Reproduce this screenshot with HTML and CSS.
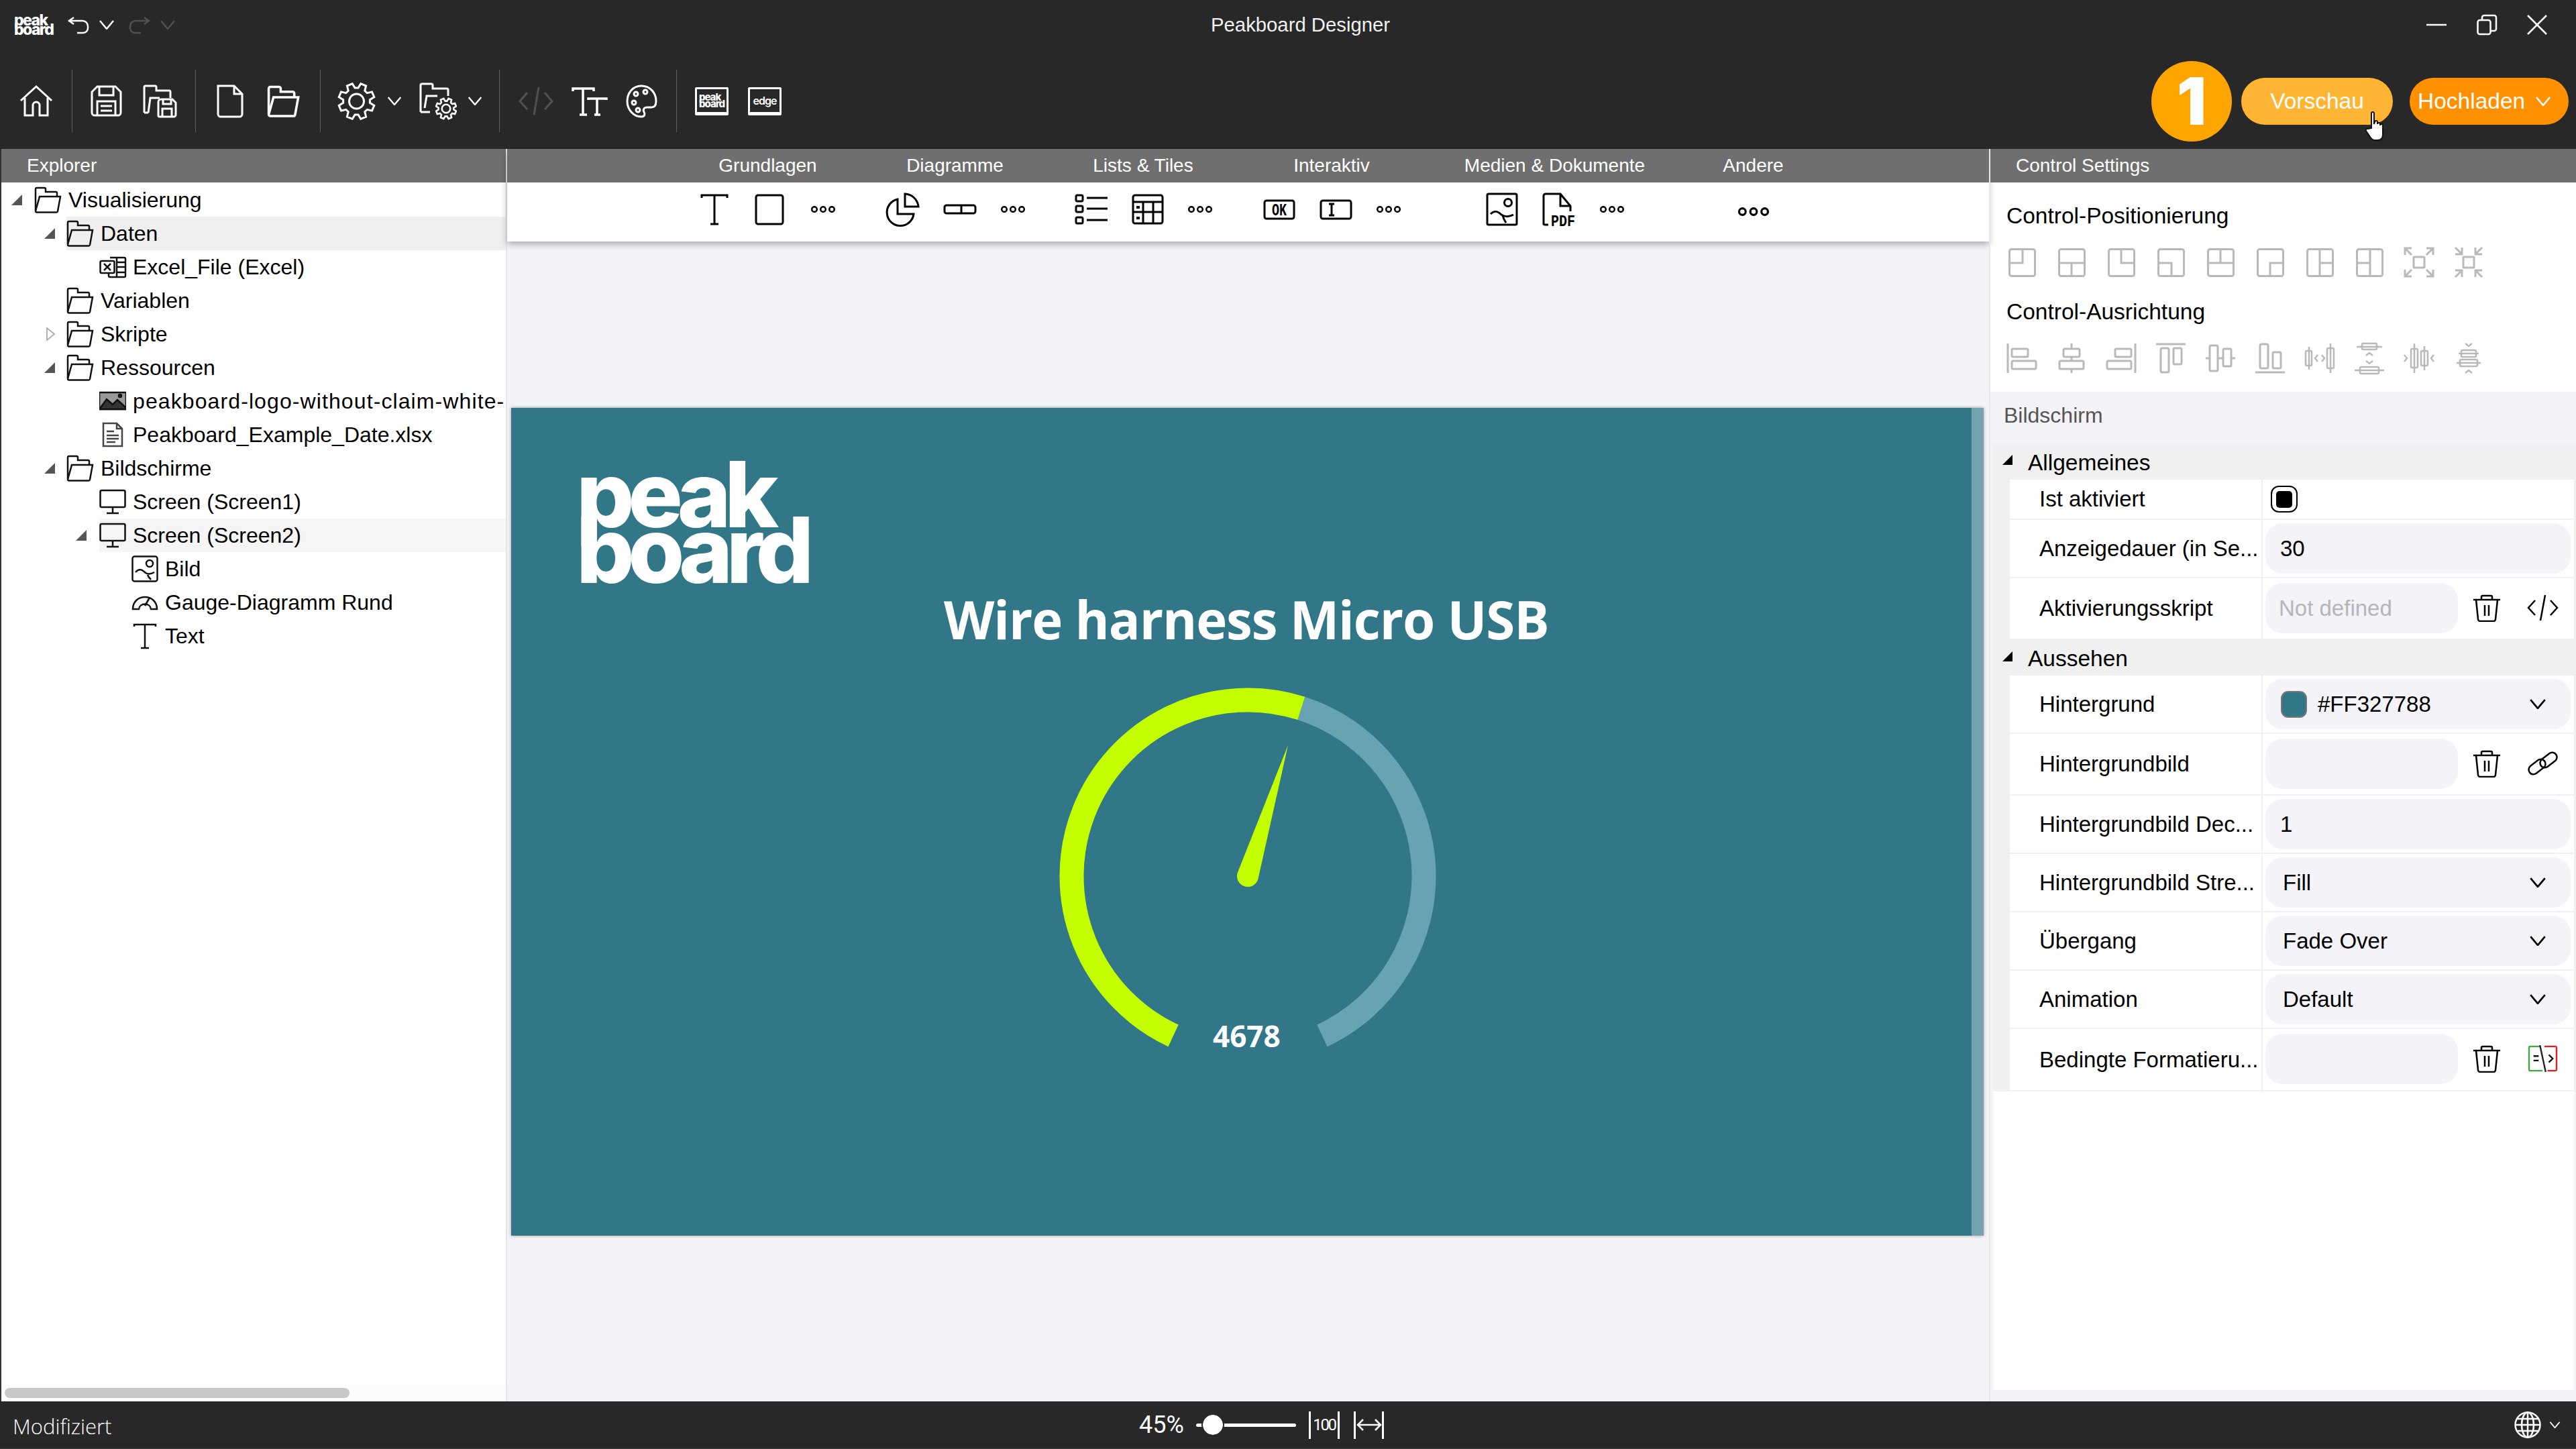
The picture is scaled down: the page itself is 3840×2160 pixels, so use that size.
FILE: index.html
```html
<!DOCTYPE html>
<html lang="de">
<head>
    <meta charset="UTF-8">
    <title>Peakboard Designer</title>
    <link rel="stylesheet" href="styles.css">
</head>
<body>

<!-- shared icons -->
<svg class="defs" width="0" height="0">
    <symbol id="chev" viewBox="0 0 22 14"><path d="M1 1L11 13L21 1"/></symbol>
    <symbol id="folder" viewBox="0 0 42 40"><path d="M3 36V4a2 2 0 0 1 2-2h11a2 2 0 0 1 2 2v4h15a2 2 0 0 1 2 2v5"/><path d="M9 15h31l-4 22a2 2 0 0 1-2 1.500H5a2 2 0 0 1-2-2z"/></symbol>
    <symbol id="monitor" viewBox="0 0 40 40"><rect x="1.500" y="3" width="37" height="25" rx="2"/><path d="M20 28v8M11 37h18"/></symbol>
    <symbol id="dots" viewBox="0 0 36 10"><circle cx="5" cy="5" r="3.800"/><circle cx="18" cy="5" r="3.800"/><circle cx="31" cy="5" r="3.800"/></symbol>
    <symbol id="trash" viewBox="0 0 42 41"><path d="M1 8H41M13 8V4a2 2 0 0 1 2-2h12a2 2 0 0 1 2 2v4M5 8l3 29a3 3 0 0 0 3 3h20a3 3 0 0 0 3-3l3-29M18 16v16M24 16v16"/></symbol>
    <symbol id="gear" viewBox="0 0 56 56"><polygon points="30.400,8.100 34.300,1.700 42.100,5 40.300,12.200 43.800,15.700 51,13.900 54.300,21.700 47.900,25.600 47.900,30.400 54.300,34.300 51,42.100 43.800,40.300 40.300,43.800 42.100,51 34.300,54.300 30.400,47.900 25.600,47.900 21.700,54.300 13.900,51 15.700,43.800 12.200,40.300 5,42.100 1.700,34.300 8.100,30.400 8.100,25.600 1.700,21.700 5,13.900 12.200,15.700 15.700,12.200 13.900,5 21.700,1.700 25.600,8.100"/><circle cx="28" cy="28" r="11"/></symbol>
</svg>

<header class="titlebar">
    <div class="titlebar-left">
        <div class="logo logo-title">peak<br>board</div>
        <svg class="ico thin undo" viewBox="0 0 32 25"><path d="M9 1L2 6L9 11M2 6H22a8 8 0 0 1 8 8v3a7 7 0 0 1-7 7H14"/></svg>
        <svg class="ico thin chev-sm"><use href="#chev"/></svg>
        <svg class="ico thin undo dim redo" viewBox="0 0 32 25"><path d="M23 1L30 6L23 11M30 6H10a8 8 0 0 0-8 8v3a7 7 0 0 0 7 7h9"/></svg>
        <svg class="ico thin chev-sm dim"><use href="#chev"/></svg>
    </div>
    <div class="app-title">Peakboard Designer</div>
    <div class="window-controls">
        <svg class="ico thin win" viewBox="0 0 30 30"><path d="M0 15H30"/></svg>
        <svg class="ico thin win" viewBox="0 0 30 30"><rect x="1.500" y="8" width="19" height="21" rx="3"/><path d="M8 8V4a3 3 0 0 1 3-3h15a3 3 0 0 1 3 3v17a3 3 0 0 1-3 3h-5"/></svg>
        <svg class="ico thin win" viewBox="0 0 30 30"><path d="M1 1L29 29M29 1L1 29"/></svg>
    </div>
</header>

<div class="toolbar">
    <div class="tb-group tb-home">
        <svg class="ico tb-icon" width="50" height="47" viewBox="0 0 50 47"><path d="M2 23L25 2L48 23M8 19V45H20V30a5 5 0 0 1 10 0V45H42V19"/></svg>
    </div>
    <div class="tb-group tb-save">
        <svg class="ico tb-icon" width="47" height="47" viewBox="0 0 47 47"><path d="M10 2H37L45 10V41a4 4 0 0 1-4 4H6a4 4 0 0 1-4-4V10zM13 2V15H34V2M10 45V24H37V45M15 31H32M15 38H32"/></svg>
        <svg class="ico tb-icon" width="51" height="50" viewBox="0 0 51 50"><path d="M2 42V4a2 2 0 0 1 2-2h14a2 2 0 0 1 2 2v5h19a2 2 0 0 1 2 2v9M8 42H2M8 42L11 20H25"/><path d="M31 22H44L49 27V45a3 3 0 0 1-3 3H25a2 2 0 0 1-2-2V26a4 4 0 0 1 4-4zM30 22V29H42V22M29 48V36H43V48"/></svg>
    </div>
    <div class="tb-group tb-file">
        <svg class="ico tb-icon" width="42" height="50" viewBox="0 0 42 50"><path d="M3 2H27L39 14V44a4 4 0 0 1-4 4H7a4 4 0 0 1-4-4zM27 2V14H39"/></svg>
        <svg class="ico tb-icon" width="50" height="50" viewBox="0 0 50 50"><use href="#folder"/></svg>
    </div>
    <div class="tb-group tb-settings">
        <svg class="ico tb-icon" width="57" height="56"><use href="#gear"/></svg>
        <svg class="ico thin chev-md"><use href="#chev"/></svg>
        <svg class="ico tb-icon folder-gear" width="56" height="56" viewBox="0 0 56 56"><path d="M2 44V4a2 2 0 0 1 2-2h14a2 2 0 0 1 2 2v5h21a2 2 0 0 1 2 2v9M2 44H16M8 38L11 20H27"/><svg x="24" y="22" width="32" height="34"><use href="#gear" stroke-width="4.500"/></svg></svg>
        <svg class="ico thin chev-md chev-last"><use href="#chev"/></svg>
    </div>
    <div class="tb-group tb-view">
        <svg class="ico tb-icon dim" width="52" height="43" viewBox="0 0 52 43"><path d="M13 9L2 22L13 34M39 9L50 22L39 34M30 1L23 42"/></svg>
        <svg class="ico thin tb-icon" width="50" height="42" viewBox="0 0 50 42"><path d="M0 6V2H31V6M15 2V41M10 41H21M23 19V17H50V19M36 17V41M32 41H41" stroke-width="3.500"/></svg>
        <svg class="ico tb-icon" width="47" height="50" viewBox="0 0 47 50"><path d="M23 2C10 2 2 13 2 25s9 23 21 23c5 0 6-4 4-7-2-4 0-7 5-7h6c5 0 7-4 7-9C45 12 36 2 23 2z"/><circle cx="15" cy="14" r="3"/><circle cx="29" cy="11" r="3"/><circle cx="12" cy="27" r="3"/><circle cx="18" cy="38" r="3"/></svg>
    </div>
    <div class="tb-group tb-target">
        <div class="target-box"><div class="logo logo-box">peak<br>board</div></div>
        <div class="target-box"><span class="target-edge">edge</span></div>
    </div>
    <div class="tb-actions">
        <div class="step-badge">1</div>
        <div class="btn btn-preview">
            Vorschau
            <svg class="hand" width="31" height="45" viewBox="0 0 31 45"><path d="M10 26V4a2 2 0 0 1 4 0V20l1-3a2 2 0 0 1 4 0V20a2 2 0 0 1 4 0v2a2 2 0 0 1 4 0V36c0 5-3 8-8 8H15c-3 0-5-2-7-5L2 30c-1-2 1-4 3-3z" fill="#fff" stroke="#111" stroke-width="2"/></svg>
        </div>
        <div class="btn btn-upload">Hochladen <svg class="ico thin chev-sm"><use href="#chev"/></svg></div>
    </div>
</div>

<div class="main">
    <!-- Explorer -->
    <aside class="explorer">
        <div class="panel-head">Explorer</div>
        <div class="tree">
            <div class="row lvl0"><svg class="caret" viewBox="0 0 16 16"><polygon points="0,16 16,16 16,0"/></svg><div class="node"><svg class="ico tree-ico folder-ico"><use href="#folder"/></svg><span>Visualisierung</span></div></div>
            <div class="row lvl1"><svg class="caret" viewBox="0 0 16 16"><polygon points="0,16 16,16 16,0"/></svg><div class="node hover"><svg class="ico tree-ico folder-ico"><use href="#folder"/></svg><span>Daten</span></div></div>
            <div class="row lvl2"><div class="node"><svg class="ico tree-ico" viewBox="0 0 40 40"><path d="M16 6H37a2 2 0 0 1 2 2V33a2 2 0 0 1-2 2H16a2 2 0 0 1-2-2V29M26 6V35M26 13H39M26 20H39M26 28H39"/><rect x="1.500" y="11" width="21" height="18" rx="2"/><path d="M7 15l10 10M17 15L7 25"/></svg><span>Excel_File (Excel)</span></div></div>
            <div class="row lvl1"><div class="caret-slot"></div><div class="node"><svg class="ico tree-ico folder-ico"><use href="#folder"/></svg><span>Variablen</span></div></div>
            <div class="row lvl1"><svg class="caret closed" viewBox="0 0 16 20"><polygon points="4,1 15,10 4,19"/></svg><div class="node"><svg class="ico tree-ico folder-ico"><use href="#folder"/></svg><span>Skripte</span></div></div>
            <div class="row lvl1"><svg class="caret" viewBox="0 0 16 16"><polygon points="0,16 16,16 16,0"/></svg><div class="node"><svg class="ico tree-ico folder-ico"><use href="#folder"/></svg><span>Ressourcen</span></div></div>
            <div class="row lvl2"><div class="node"><svg class="tree-ico" viewBox="0 0 40 40"><rect x="0" y="7" width="40" height="25" fill="#999"/><path d="M0 32L11 17L20 25L27 18L40 30V32z" fill="#333"/><circle cx="31" cy="12" r="2" fill="#333"/></svg><span class="long-name">peakboard-logo-without-claim-white-</span></div></div>
            <div class="row lvl2"><div class="node"><svg class="ico tree-ico file-ico" viewBox="0 0 40 40"><path d="M6 3H26L34 11V37H6zM26 3V11H34M11 15H22M11 21H29M11 26H29M11 31H24"/></svg><span>Peakboard_Example_Date.xlsx</span></div></div>
            <div class="row lvl1"><svg class="caret" viewBox="0 0 16 16"><polygon points="0,16 16,16 16,0"/></svg><div class="node"><svg class="ico tree-ico folder-ico"><use href="#folder"/></svg><span>Bildschirme</span></div></div>
            <div class="row lvl2"><div class="node"><svg class="ico tree-ico"><use href="#monitor"/></svg><span>Screen (Screen1)</span></div></div>
            <div class="row lvl2-open"><svg class="caret" viewBox="0 0 16 16"><polygon points="0,16 16,16 16,0"/></svg><div class="node selected"><svg class="ico tree-ico"><use href="#monitor"/></svg><span>Screen (Screen2)</span></div></div>
            <div class="row lvl3"><div class="node"><svg class="ico tree-ico" viewBox="0 0 40 40"><rect x="1.500" y="1.500" width="37" height="37" rx="3"/><circle cx="27" cy="12" r="5"/><path d="M6 25c6-7 11-3 15 1 3 2 8 2 13-1M24 29c1 3 3 5 5 7"/></svg><span>Bild</span></div></div>
            <div class="row lvl3"><div class="node"><svg class="ico tree-ico" viewBox="0 0 40 40"><path d="M2 30C2 6 38 6 38 30H29C28 20 12 20 11 30zM20 25L27 13"/></svg><span>Gauge-Diagramm Rund</span></div></div>
            <div class="row lvl3"><div class="node"><svg class="ico tree-ico" viewBox="0 0 40 40"><path d="M4 6V3H36V6M20 3V38M14 38H26"/></svg><span>Text</span></div></div>
        </div>
        <div class="tree-scroll"><div class="tree-thumb"></div></div>
    </aside>

    <!-- Designer -->
    <section class="designer">
        <div class="toolbox">
            <div class="tool-col col-a"><div class="tool-label">Grundlagen</div>
                <div class="tool-icons basics">
                    <svg class="ico black" width="40" height="47" viewBox="0 0 40 47"><path d="M1 6V2H39V6M20 2V45M14 45H26"/></svg>
                    <svg class="ico black" width="44" height="47" viewBox="0 0 44 47"><rect x="2" y="2" width="40" height="43" rx="3"/></svg>
                    <svg class="ico black dots"><use href="#dots"/></svg>
                </div>
            </div>
            <div class="tool-col col-a"><div class="tool-label">Diagramme</div>
                <div class="tool-icons">
                    <svg class="ico black" width="50" height="50" viewBox="0 0 50 50"><path d="M18 10A20 20 0 1 0 42 32H18z"/><path d="M29 2A21 21 0 0 1 49 21H29z"/></svg>
                    <svg class="ico black" width="50" height="16" viewBox="0 0 50 16"><rect x="2" y="2" width="46" height="12" rx="3"/><path d="M27 2V14"/></svg>
                    <svg class="ico black dots"><use href="#dots"/></svg>
                </div>
            </div>
            <div class="tool-col col-b"><div class="tool-label">Lists &amp; Tiles</div>
                <div class="tool-icons">
                    <svg class="ico black" width="49" height="46" viewBox="0 0 49 46"><rect x="2" y="2" width="10" height="9" rx="2"/><rect x="2" y="18" width="10" height="9" rx="2"/><rect x="2" y="35" width="10" height="9" rx="2"/><path d="M18 6H49M18 22H49M18 39H49"/></svg>
                    <svg class="ico black" width="48" height="46" viewBox="0 0 48 46"><rect x="2" y="2" width="44" height="42" rx="3"/><path d="M2 12H46M2 27H46M17 12V44M32 12V44"/><path d="M7 20H12M7 36H12" stroke-width="4"/></svg>
                    <svg class="ico black dots"><use href="#dots"/></svg>
                </div>
            </div>
            <div class="tool-col col-c"><div class="tool-label">Interaktiv</div>
                <div class="tool-icons">
                    <svg class="ico black" width="48" height="31" viewBox="0 0 48 31"><rect x="2" y="2" width="44" height="27" rx="3"/><text class="icon-text" x="13" y="24" textLength="22" lengthAdjust="spacingAndGlyphs">OK</text></svg>
                    <svg class="ico black" width="49" height="31" viewBox="0 0 49 31"><rect x="2" y="2" width="45" height="27" rx="3"/><path d="M14 7H22M18 7V24M14 24H22"/></svg>
                    <svg class="ico black dots"><use href="#dots"/></svg>
                </div>
            </div>
            <div class="tool-col col-d"><div class="tool-label">Medien &amp; Dokumente</div>
                <div class="tool-icons">
                    <svg class="ico black" width="48" height="50" viewBox="0 0 48 50"><rect x="2" y="2" width="44" height="46" rx="2"/><circle cx="33" cy="15" r="5.500"/><path d="M7 32c6-6 11-4 16 1 4 3 11 4 18 0M25 34c1 5 3 8 5 11"/></svg>
                    <svg class="ico black" width="50" height="50" viewBox="0 0 50 50"><path d="M2 48V5a3 3 0 0 1 3-3H27L42 20V28M27 2V20H42M2 46a2 2 0 0 0 2 2H9"/><text class="pdf-text" x="13" y="50" textLength="36" lengthAdjust="spacingAndGlyphs">PDF</text></svg>
                    <svg class="ico black dots"><use href="#dots"/></svg>
                </div>
            </div>
            <div class="tool-col col-e"><div class="tool-label">Andere</div>
                <div class="tool-icons">
                    <svg class="ico black dots-big"><use href="#dots"/></svg>
                </div>
            </div>
        </div>

        <div class="screen">
            <div class="logo logo-screen">peak<br>board</div>
            <div class="screen-title">Wire harness Micro USB</div>
            <svg class="gauge" width="562" height="562" viewBox="0 0 562 562">
                <path class="gauge-rest" d="M360.800 30.900A262.500 262.500 0 0 1 391.900 518.900"/>
                <path class="gauge-value" d="M170.100 518.900A262.500 262.500 0 0 1 360.800 30.900"/>
                <path class="gauge-needle" d="M265.700 276.300L341 86L296.300 285.700A16 16 0 0 1 265.700 276.300z"/>
            </svg>
            <div class="gauge-number">4678</div>
            <div class="screen-edge"></div>
        </div>
    </section>

    <!-- Control Settings -->
    <aside class="settings">
        <div class="panel-head settings-head">Control Settings</div>
        <div class="settings-top">
            <div class="settings-title">Control-Positionierung</div>
            <div class="pos-icons">
                <svg class="ico grey" width="41" height="43" viewBox="0 0 41 43"><rect x="1.500" y="1.500" width="38" height="40" rx="3"/><path d="M21 2V22H2"/></svg>
                <svg class="ico grey" width="41" height="43" viewBox="0 0 41 43"><rect x="1.500" y="1.500" width="38" height="40" rx="3"/><path d="M2 22H39M20 22V41"/></svg>
                <svg class="ico grey" width="41" height="43" viewBox="0 0 41 43"><rect x="1.500" y="1.500" width="38" height="40" rx="3"/><path d="M20 2V22H39"/></svg>
                <svg class="ico grey" width="41" height="43" viewBox="0 0 41 43"><rect x="1.500" y="1.500" width="38" height="40" rx="3"/><path d="M2 22H21V41"/></svg>
                <svg class="ico grey" width="41" height="43" viewBox="0 0 41 43"><rect x="1.500" y="1.500" width="38" height="40" rx="3"/><path d="M2 22H39M20 2V22"/></svg>
                <svg class="ico grey" width="41" height="43" viewBox="0 0 41 43"><rect x="1.500" y="1.500" width="38" height="40" rx="3"/><path d="M39 22H20V41"/></svg>
                <svg class="ico grey" width="41" height="43" viewBox="0 0 41 43"><rect x="1.500" y="1.500" width="38" height="40" rx="3"/><path d="M20 2V41M20 22H39"/></svg>
                <svg class="ico grey" width="41" height="43" viewBox="0 0 41 43"><rect x="1.500" y="1.500" width="38" height="40" rx="3"/><path d="M21 2V41M2 22H21"/></svg>
                <svg class="ico grey" width="46" height="46" viewBox="0 0 46 46"><rect x="15" y="15" width="16" height="16" rx="1"/><path d="M2 12V2H12M2 2L12 12M34 2H44V12M44 2L34 12M2 34V44H12M2 44L12 34M34 44H44V34M44 44L34 34"/></svg>
                <svg class="ico grey" width="46" height="46" viewBox="0 0 46 46"><rect x="15" y="15" width="16" height="16" rx="1"/><path d="M3 11H13V1M3 1L13 11M33 1V11H43M43 1L33 11M3 35H13V45M3 45L13 35M33 45V35H43M43 45L33 35"/></svg>
            </div>
            <div class="settings-title second">Control-Ausrichtung</div>
            <div class="pos-icons">
                <svg class="ico grey" width="46" height="46" viewBox="0 0 46 46"><path d="M2 1V45"/><rect x="8" y="9" width="24" height="12" rx="2"/><rect x="8" y="27" width="36" height="12" rx="2"/></svg>
                <svg class="ico grey" width="46" height="46" viewBox="0 0 46 46"><path d="M23 1V9M23 21V27M23 39V45"/><rect x="11" y="9" width="24" height="12" rx="2"/><rect x="5" y="27" width="36" height="12" rx="2"/></svg>
                <svg class="ico grey" width="46" height="46" viewBox="0 0 46 46"><path d="M44 1V45"/><rect x="14" y="9" width="24" height="12" rx="2"/><rect x="2" y="27" width="36" height="12" rx="2"/></svg>
                <svg class="ico grey" width="46" height="46" viewBox="0 0 46 46"><path d="M1 2H45"/><rect x="8" y="8" width="12" height="36" rx="2"/><rect x="27" y="8" width="12" height="24" rx="2"/></svg>
                <svg class="ico grey" width="46" height="46" viewBox="0 0 46 46"><path d="M1 23H7M19 23H27M39 23H45"/><rect x="7" y="4" width="12" height="38" rx="2"/><rect x="27" y="9" width="12" height="26" rx="2"/></svg>
                <svg class="ico grey" width="46" height="46" viewBox="0 0 46 46"><path d="M1 44H45"/><rect x="8" y="2" width="12" height="36" rx="2"/><rect x="27" y="14" width="12" height="24" rx="2"/></svg>
                <svg class="ico grey thin2" width="46" height="46" viewBox="0 0 46 46"><path d="M7 6V40M39 1V45"/><rect x="2" y="12" width="9" height="22" rx="2"/><rect x="34" y="8" width="10" height="30" rx="2"/><path d="M20 18L16 23L20 28M26 18L30 23L26 28"/></svg>
                <svg class="ico grey thin2" width="46" height="46" viewBox="0 0 46 46"><path d="M4 6H42M1 41H45"/><rect x="12" y="1" width="22" height="9" rx="2"/><rect x="9" y="36" width="28" height="10" rx="2"/><path d="M18 19L23 15L28 19M18 27L23 31L28 27"/></svg>
                <svg class="ico grey thin2" width="46" height="46" viewBox="0 0 46 46"><path d="M16 1V45M31 5V41"/><rect x="11" y="9" width="10" height="28" rx="2"/><rect x="26" y="12" width="10" height="22" rx="2"/><path d="M1 18L5 23L1 28M45 18L41 23L45 28"/></svg>
                <svg class="ico grey thin2" width="46" height="46" viewBox="0 0 46 46"><path d="M5 30H41M8 16H38"/><rect x="12" y="11" width="22" height="10" rx="2"/><rect x="10" y="25" width="26" height="10" rx="2"/><path d="M18 1L23 5L28 1M18 45L23 41L28 45"/></svg>
            </div>
        </div>

        <div class="settings-body">
            <div class="screen-name">Bildschirm</div>
            <div class="prop-group">
                <div class="group-head head-first"><svg class="group-caret" viewBox="0 0 15 15"><polygon points="0,15 15,15 15,0"/></svg>Allgemeines</div>
                <div class="prop row-check">
                    <div class="prop-name">Ist aktiviert</div>
                    <div class="prop-value"><div class="checkbox"><div class="checkbox-mark"></div></div></div>
                </div>
                <div class="prop">
                    <div class="prop-name">Anzeigedauer (in Se...</div>
                    <div class="prop-value"><div class="input">30</div></div>
                </div>
                <div class="prop row-tall row-nosep">
                    <div class="prop-name">Aktivierungsskript</div>
                    <div class="prop-value"><div class="input short placeholder">Not defined</div>
                        <svg class="ico act-trash"><use href="#trash"/></svg>
                        <svg class="ico act-right" viewBox="0 0 47 40"><path d="M12 9L2 20L12 31M35 9L45 20L35 31M27 1L20 39"/></svg>
                    </div>
                </div>
                <div class="group-head"><svg class="group-caret" viewBox="0 0 15 15"><polygon points="0,15 15,15 15,0"/></svg>Aussehen</div>
                <div class="prop">
                    <div class="prop-name">Hintergrund</div>
                    <div class="prop-value"><div class="input select color"><span class="swatch"></span><span class="color-text">#FF327788</span><svg class="ico select-chev"><use href="#chev"/></svg></div></div>
                </div>
                <div class="prop row-tall">
                    <div class="prop-name">Hintergrundbild</div>
                    <div class="prop-value"><div class="input short"></div>
                        <svg class="ico act-trash"><use href="#trash"/></svg>
                        <svg class="ico act-right" viewBox="0 0 47 40"><rect x="1" y="18" width="28" height="14" rx="7" transform="rotate(-38 15 25)"/><rect x="18" y="8" width="28" height="14" rx="7" transform="rotate(-38 32 15)"/></svg>
                    </div>
                </div>
                <div class="prop">
                    <div class="prop-name">Hintergrundbild Dec...</div>
                    <div class="prop-value"><div class="input">1</div></div>
                </div>
                <div class="prop">
                    <div class="prop-name">Hintergrundbild Stre...</div>
                    <div class="prop-value"><div class="input select">Fill<svg class="ico select-chev"><use href="#chev"/></svg></div></div>
                </div>
                <div class="prop">
                    <div class="prop-name">Übergang</div>
                    <div class="prop-value"><div class="input select">Fade Over<svg class="ico select-chev"><use href="#chev"/></svg></div></div>
                </div>
                <div class="prop">
                    <div class="prop-name">Animation</div>
                    <div class="prop-value"><div class="input select">Default<svg class="ico select-chev"><use href="#chev"/></svg></div></div>
                </div>
                <div class="prop row-tall row-last">
                    <div class="prop-name">Bedingte Formatieru...</div>
                    <div class="prop-value"><div class="input short"></div>
                        <svg class="ico act-trash"><use href="#trash"/></svg>
                        <svg class="act-right cond" viewBox="0 0 47 42"><path d="M20 2H4a2 2 0 0 0-2 2V38a2 2 0 0 0 2 2H23" stroke="#3fa83f"/><path d="M26 2H43a2 2 0 0 1 2 2V38a2 2 0 0 1-2 2H31" stroke="#e81e1e"/><path d="M19 0L28 42" stroke="#222"/><path d="M9 17H17M9 24H17M33 15L39 21L33 27" stroke="#111"/></svg>
                    </div>
                </div>
            </div>
            <div class="settings-fill"></div>
        </div>
    </aside>
</div>

<footer class="statusbar">
    <div class="status-text">Modifiziert</div>
    <div class="zoom-value">45%</div>
    <div class="slider"><div class="slider-thumb"></div></div>
    <div class="zoom-btn zoom-100">100</div>
    <div class="zoom-btn zoom-fit"><svg class="ico thin" width="36" height="22" viewBox="0 0 36 22"><path d="M1 11H35M9 3L1 11L9 19M27 3L35 11L27 19"/></svg></div>
    <svg class="ico thin globe" width="40" height="40" viewBox="0 0 40 40"><circle cx="20" cy="20" r="18.500"/><ellipse cx="20" cy="20" rx="9" ry="18.500"/><path d="M20 2V38M2 20H38M5 11H35M5 29H35"/></svg>
    <svg class="ico thin globe-chev"><use href="#chev"/></svg>
</footer>

</body>
</html>
```

FILE: styles.css
```css
html, body {
    margin: 0;
    padding: 0;
}

body {
    width: 3840px;
    height: 2160px;
    overflow: hidden;
    display: flex;
    flex-direction: column;
    background-color: #282828;
    color: #000;
    font-family: "Liberation Sans", Arial, sans-serif;
    font-size: 32px;
}

.defs {
    position: absolute;
}

/* icons are plain outlines unless a class says otherwise */
.ico {
    fill: none;
    stroke: #fff;
    stroke-width: 3;
    flex: none;
    overflow: visible;
}

.thin {
    stroke-width: 2.5;
}

.dim {
    stroke: #555;
    opacity: 0.9;
}

.black {
    stroke: #000;
}

.grey {
    stroke: #b9b9b9;
}

.thin2 {
    stroke-width: 2.5;
}

/* peakboard word mark */
.logo {
    font-family: Inter, "Liberation Sans", sans-serif;
    font-weight: 800;
    color: #fff;
    letter-spacing: -0.07em;
    line-height: 0.61;
}

.logo-title {
    font-size: 23px;
    width: 58px;
}

.logo-box {
    font-size: 15px;
    color: #fff;
}

.logo-screen {
    position: absolute;
    left: 97px;
    top: 88px;
    font-size: 136px;
}

/* Title bar */
.titlebar {
    height: 74px;
    display: flex;
    align-items: center;
    flex: none;
    color: #fff;
}

.titlebar-left {
    width: 1805px;
    padding-left: 21px;
    box-sizing: border-box;
    display: flex;
    align-items: center;
}

.undo {
    width: 32px;
    height: 25px;
    margin-left: 22px;
}

.redo {
    margin-left: 22px;
}

.chev-sm {
    width: 22px;
    height: 14px;
    margin-left: 15px;
}

.app-title {
    font-size: 29.300px;
    color: #f0f0f0;
}

.window-controls {
    margin-left: auto;
    padding-right: 43px;
    display: flex;
    gap: 45px;
}

.win {
    width: 30px;
    height: 30px;
}

/* Toolbar */
.toolbar {
    height: 148px;
    box-sizing: border-box;
    padding: 30px 0 25px;
    display: flex;
    flex: none;
}

.tb-group {
    display: flex;
    align-items: center;
    justify-content: center;
    box-sizing: border-box;
    border-right: 1px solid #5f5f5f;
}

.tb-home { width: 108px; }
.tb-save { width: 184px; gap: 31px; }
.tb-file { width: 186px; gap: 33px; }
.tb-settings { width: 267px; }
.tb-view { width: 264px; gap: 29px; }

.tb-target {
    border-right: none;
    justify-content: flex-start;
    padding-left: 27px;
    gap: 29px;
}

.chev-md {
    width: 22px;
    height: 13px;
    margin-left: 17px;
    margin-right: 26px;
}

.chev-last {
    margin-left: 16px;
    margin-right: 0;
}

.target-box {
    width: 50px;
    height: 42px;
    box-sizing: border-box;
    border: 3px solid #fff;
    border-bottom-width: 5px;
    border-radius: 2px;
    display: flex;
    align-items: center;
    justify-content: center;
    overflow: hidden;
}

.target-edge {
    font-family: Inter, "Liberation Sans", sans-serif;
    font-size: 16px;
    font-weight: 600;
    color: #fff;
    letter-spacing: -1px;
}

.tb-actions {
    margin-left: auto;
    padding-right: 11px;
    display: flex;
    align-items: center;
    color: #fff;
}

.step-badge {
    width: 120px;
    height: 120px;
    border-radius: 50%;
    background-color: #ffa500;
    display: flex;
    align-items: center;
    justify-content: center;
    font-family: Inter, "Liberation Sans", sans-serif;
    font-size: 98px;
    font-weight: 900;
    margin-right: 14px;
}

.btn {
    height: 70px;
    border-radius: 35px;
    display: flex;
    align-items: center;
    font-size: 33.500px;
    box-sizing: border-box;
    position: relative;
}

.btn-preview {
    width: 226px;
    justify-content: center;
    background-color: #ffb433;
    margin-right: 25px;
}

.btn-upload {
    width: 237px;
    padding-left: 12px;
    background-color: #ff9000;
}

.btn-upload .chev-sm {
    margin-left: 16px;
}

.hand {
    position: absolute;
    left: 184px;
    top: 49px;
}

/* Main area */
.main {
    height: 1867px;
    display: flex;
    flex: none;
    background-color: #fff;
}

.panel-head {
    height: 50px;
    box-sizing: border-box;
    padding-left: 38px;
    background-color: #6f6f6f;
    color: #fff;
    font-size: 28px;
    line-height: 50px;
    flex: none;
}

/* Explorer */
.explorer {
    width: 754px;
    box-sizing: border-box;
    border-left: 2px solid #333;
    display: flex;
    flex-direction: column;
    background-color: #fff;
    flex: none;
}

.tree {
    flex: 1;
    overflow: hidden;
    padding-top: 1px;
}

.row {
    height: 50px;
    display: flex;
    align-items: center;
    box-sizing: border-box;
}

.lvl0 { padding-left: 15px; }
.lvl1 { padding-left: 64px; }
.lvl2 { padding-left: 146px; }
.lvl2-open { padding-left: 111px; }
.lvl3 { padding-left: 194px; }

.caret {
    width: 16px;
    height: 16px;
    margin-right: 17px;
    flex: none;
    fill: #555;
}

.lvl1 .caret { margin-right: 16px; }
.lvl2-open .caret { margin-right: 19px; }

.caret.closed {
    fill: none;
    stroke: #b0b0b0;
    stroke-width: 2;
    height: 20px;
}

.caret-slot {
    width: 16px;
    margin-right: 16px;
    flex: none;
}

.node {
    flex: 1;
    min-width: 0;
    height: 100%;
    display: flex;
    align-items: center;
    gap: 10px;
    overflow: hidden;
    white-space: nowrap;
}

.node.hover {
    background-color: #efefef;
}

.node.selected {
    background-color: #f5f5f5;
}

.tree-ico {
    width: 40px;
    height: 40px;
    flex: none;
    stroke: #111;
    stroke-width: 2.500;
}

.folder-ico {
    width: 42px;
}

.file-ico {
    stroke: #444;
}

.long-name {
    letter-spacing: 1.100px;
}

.tree-scroll {
    height: 26px;
    flex: none;
    padding: 6px 0 0 5px;
    box-sizing: border-box;
    background-color: #fcfcfc;
}

.tree-thumb {
    width: 514px;
    height: 15px;
    border-radius: 8px;
    background-color: #c8c8c8;
}

/* Designer */
.designer {
    flex: 1;
    min-width: 0;
    background-color: #f3f3f8;
    border-left: 2px solid #e6e6e6;
}

.toolbox {
    height: 138px;
    padding-left: 249px;
    display: flex;
    background: linear-gradient(#6f6f6f 50px, #fff 50px);
    box-shadow: 0 4px 10px rgba(0, 0, 0, 0.3);
}

.tool-col {
    width: 279px;
    display: flex;
    flex-direction: column;
    align-items: center;
}

.col-b { width: 282px; }
.col-c { width: 280px; }
.col-d { width: 385px; }
.col-e { width: 207px; }

.tool-label {
    height: 50px;
    line-height: 50px;
    color: #fff;
    font-size: 28px;
    white-space: nowrap;
}

.tool-icons {
    height: 88px;
    padding-bottom: 8px;
    box-sizing: border-box;
    display: flex;
    align-items: center;
    gap: 36px;
}

.basics {
    gap: 40px;
}

.dots {
    width: 36px;
    height: 10px;
    stroke-width: 2.500;
}

.dots-big {
    width: 46px;
    height: 13px;
    stroke-width: 2.500;
    margin-top: 6px;
}

.icon-text {
    font-family: "Liberation Mono", monospace;
    font-size: 25px;
    font-weight: 700;
    fill: #000;
    stroke: none;
}

.pdf-text {
    font-family: "Liberation Mono", monospace;
    font-size: 23px;
    font-weight: 700;
    fill: #000;
    stroke: none;
}

/* the free canvas of the screen being edited */
.screen {
    position: relative;
    width: 2195px;
    height: 1234px;
    margin: 248px 0 0 6px;
    background-color: #327788;
    box-shadow: 0 0 5px rgba(0, 0, 0, 0.35);
    overflow: hidden;
}

.screen-title {
    position: absolute;
    left: 645px;
    top: 262px;
    width: 900px;
    text-align: center;
    color: #fff;
    font-family: "Open Sans", sans-serif;
    font-size: 78px;
    font-weight: 700;
    letter-spacing: -1.100px;
    white-space: nowrap;
}

.gauge {
    position: absolute;
    left: 817px;
    top: 417px;
    fill: none;
}

.gauge-value {
    stroke: #c3ff00;
    stroke-width: 36;
}

.gauge-rest {
    stroke: #68a3b3;
    stroke-width: 36;
}

.gauge-needle {
    fill: #c3ff00;
}

.gauge-number {
    position: absolute;
    left: 1046px;
    top: 906px;
    width: 100px;
    text-align: center;
    color: #fff;
    font-family: "Open Sans", sans-serif;
    font-size: 44px;
    font-weight: 700;
}

.screen-edge {
    position: absolute;
    right: 0;
    top: 0;
    bottom: 0;
    width: 18px;
    background-color: #74a2ae;
}

/* Control Settings */
.settings {
    width: 875px;
    flex: none;
    box-sizing: border-box;
    display: flex;
    flex-direction: column;
    border-left: 2px solid #e6e6e6;
}

.settings-head {
    margin-left: -2px;
    border-left: 2px solid #e6e6e6;
}

.settings-top {
    height: 312px;
    box-sizing: border-box;
    padding-top: 25px;
    flex: none;
}

.settings-title {
    height: 50px;
    line-height: 50px;
    padding-left: 24px;
    font-size: 33.500px;
}

.settings-title.second {
    margin-top: 26px;
}

.pos-icons {
    margin-top: 21px;
    padding-left: 10px;
    display: grid;
    grid-template-columns: repeat(10, 74px);
    justify-items: center;
    align-items: center;
    height: 46px;
}

.settings-body {
    flex: 1;
    display: flex;
    flex-direction: column;
    padding: 0 3px 17px 4px;
    background-color: #f3f3f8;
}

.screen-name {
    height: 78px;
    box-sizing: border-box;
    padding: 0 0 8px 16px;
    line-height: 70px;
    font-size: 32px;
    color: #555;
    flex: none;
}

.prop-group {
    background-color: #f0f0f0;
    padding-left: 25px;
    flex: none;
    margin-right: -3px;
}

.group-head {
    height: 55px;
    margin-left: -25px;
    padding-left: 52px;
    line-height: 59px;
    font-size: 33.500px;
    position: relative;
}

.head-first {
    height: 53px;
    line-height: 56px;
}

.group-caret {
    position: absolute;
    left: 14px;
    top: 19px;
    width: 15px;
    height: 15px;
}

.head-first .group-caret {
    top: 16px;
}

.prop {
    display: grid;
    grid-template-columns: 375px 1fr;
    margin-right: 3px;
    margin-bottom: 2px;
    background-color: #fff;
    height: 85px;
}

.row-check {
    height: 58px;
}

.row-tall {
    height: 90px;
}

.row-nosep {
    margin-bottom: 0;
}

.row-last {
    height: 91px;
}

.prop-name {
    padding-left: 44px;
    display: flex;
    align-items: center;
    font-size: 33px;
    white-space: nowrap;
    overflow: hidden;
}

.prop-value {
    border-left: 2px solid #f0f0f0;
    padding-left: 4px;
    display: flex;
    align-items: flex-start;
}

.input {
    flex: none;
    width: 455px;
    height: 75px;
    margin-top: 5px;
    box-sizing: border-box;
    padding-left: 22px;
    border-radius: 26px;
    background-color: #f3f3f8;
    display: flex;
    align-items: center;
    font-size: 33px;
}

.row-tall .input {
    margin-top: 7px;
}

.input.short {
    width: 287px;
}

.placeholder {
    color: #b5b5bb;
    padding-left: 20px;
}

.input.select {
    padding-left: 26px;
}

.input.color {
    padding-left: 23px;
}

.select-chev {
    width: 28px;
    height: 15px;
    margin-left: auto;
    margin-right: 35px;
    stroke: #000;
    stroke-width: 2.500;
}

.swatch {
    width: 39px;
    height: 40px;
    box-sizing: border-box;
    border: 2px solid #777;
    border-radius: 11px;
    background-color: #327788;
    margin-right: 16px;
}

.checkbox {
    margin: 9px 0 0 8px;
    width: 40px;
    height: 40px;
    box-sizing: border-box;
    border: 2px solid #000;
    border-radius: 12px;
    display: flex;
    align-items: center;
    justify-content: center;
}

.checkbox-mark {
    width: 24px;
    height: 25px;
    border-radius: 5px;
    background-color: #000;
}

.act-trash {
    width: 42px;
    height: 41px;
    margin: 24px 0 0 22px;
    stroke: #000;
    stroke-width: 2.500;
}

.act-right {
    width: 47px;
    height: 40px;
    margin: 24px 0 0 39px;
    stroke: #000;
    stroke-width: 2.500;
    fill: none;
    flex: none;
}

.settings-fill {
    flex: 1;
    background-color: #fff;
}

/* Status bar */
.statusbar {
    flex: 1;
    display: flex;
    align-items: center;
    color: #fff;
    border-bottom: 1px solid #3e3e3e;
    box-sizing: border-box;
}

.status-text {
    width: 1698px;
    box-sizing: border-box;
    padding: 4px 0 0 19px;
    font-family: "Open Sans", sans-serif;
    font-weight: 300;
    font-size: 31px;
    color: #fff;
}

.zoom-value {
    width: 85px;
    font-family: Roboto, sans-serif;
    font-size: 36px;
}

.slider {
    position: relative;
    width: 149px;
    height: 5px;
    border-radius: 3px;
    background-color: #fff;
}

.slider-thumb {
    position: absolute;
    left: 10px;
    top: -13px;
    width: 30px;
    height: 30px;
    border-radius: 50%;
    background-color: #fff;
    outline: 2px solid #282828;
}

.zoom-btn {
    height: 41px;
    box-sizing: border-box;
    border-left: 3px solid #fff;
    border-right: 3px solid #fff;
    display: flex;
    align-items: center;
    justify-content: center;
}

.zoom-100 {
    width: 46px;
    margin-left: 19px;
    font-family: Roboto, sans-serif;
    font-size: 24px;
    letter-spacing: -2.300px;
}

.zoom-fit {
    width: 45px;
    margin-left: 21px;
}

.globe {
    margin-left: auto;
}

.globe-chev {
    width: 17px;
    height: 10px;
    margin: 0 23px 0 12px;
}
```
